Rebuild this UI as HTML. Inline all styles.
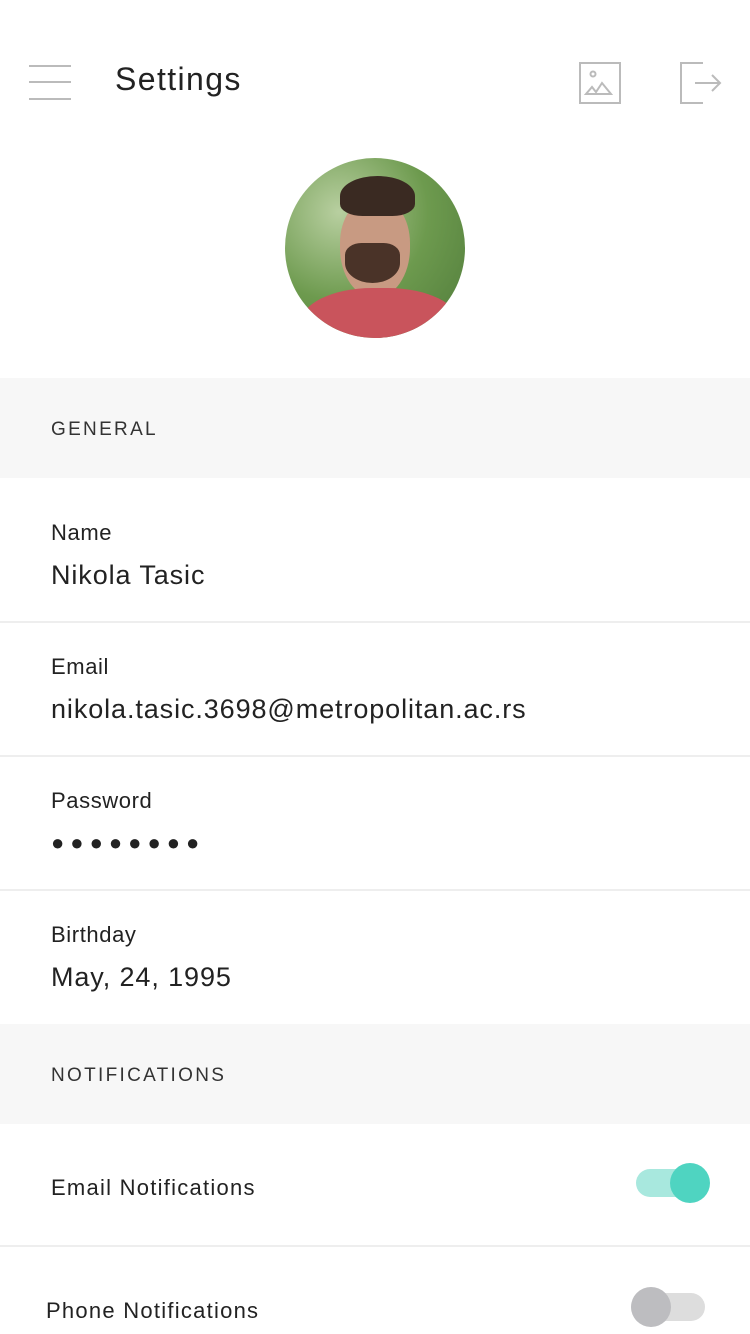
<!DOCTYPE html>
<html><head><meta charset="utf-8"><style>
*{margin:0;padding:0;box-sizing:border-box}
body{width:750px;height:1334px;overflow:hidden;background:#fff;font-family:"Liberation Sans",sans-serif;color:#222;position:relative}
.abs{position:absolute}
.sec{position:absolute;left:0;width:750px;height:100px;background:#f7f7f7}
.sec span{position:absolute;left:51px;top:41px;font-size:19px;letter-spacing:2.3px;color:#333}
.lbl{position:absolute;left:51px;font-size:22px;color:#222;letter-spacing:0.6px}
.val{position:absolute;left:51px;font-size:27px;color:#222;letter-spacing:0.9px}
.hr{position:absolute;left:0;width:750px;height:2px;background:#eee}
</style></head><body>
<div class="abs" style="left:29px;top:65px;width:42px;height:2px;background:#bbb"></div>
<div class="abs" style="left:29px;top:81px;width:42px;height:2px;background:#bbb"></div>
<div class="abs" style="left:29px;top:98px;width:42px;height:2px;background:#bbb"></div>
<div class="abs" style="left:115px;top:61px;font-size:32px;color:#222;letter-spacing:1.4px">Settings</div>
<svg class="abs" style="left:578px;top:61px" width="44" height="44" viewBox="0 0 44 44" fill="none" stroke="#bbb" stroke-width="2">
<rect x="2" y="2" width="40" height="40"/><circle cx="15" cy="13" r="2.5"/><path d="M8 33 L14 26 L18 31 L24 22 L33 33 Z"/></svg>
<svg class="abs" style="left:678px;top:61px" width="44" height="44" viewBox="0 0 44 44" fill="none" stroke="#bbb" stroke-width="2">
<path d="M25 2 H3 V42 H25"/><path d="M17 22 H42 M34 14 L42 22 L34 30"/></svg>
<div class="abs" style="left:285px;top:158px;width:180px;height:180px;border-radius:50%;overflow:hidden;background:radial-gradient(circle at 30% 30%,#b8cfa0,#6d9a4e 50%,#4f7a3a)">
<div class="abs" style="left:55px;top:40px;width:70px;height:100px;border-radius:45% 45% 50% 50%;background:#c89a82"></div>
<div class="abs" style="left:55px;top:18px;width:75px;height:40px;border-radius:50% 50% 30% 30%;background:#3a2a22"></div>
<div class="abs" style="left:60px;top:85px;width:55px;height:40px;border-radius:30% 30% 50% 50%;background:#4a3328"></div>
<div class="abs" style="left:15px;top:130px;width:160px;height:80px;border-radius:45% 45% 0 0;background:#c9545c"></div>
</div>
<div class="sec" style="top:378px"><span>GENERAL</span></div>
<div class="lbl" style="top:520px">Name</div><div class="val" style="top:560px">Nikola Tasic</div>
<div class="hr" style="top:621px"></div>
<div class="lbl" style="top:654px">Email</div><div class="val" style="top:694px">nikola.tasic.3698@metropolitan.ac.rs</div>
<div class="hr" style="top:755px"></div>
<div class="lbl" style="top:788px">Password</div><div class="val" style="top:830px;font-size:22px;letter-spacing:6px">●●●●●●●●</div>
<div class="hr" style="top:889px"></div>
<div class="lbl" style="top:922px">Birthday</div><div class="val" style="top:962px">May, 24, 1995</div>
<div class="sec" style="top:1024px"><span>NOTIFICATIONS</span></div>
<div class="lbl" style="top:1175px;letter-spacing:1.25px">Email Notifications</div>
<div class="abs" style="left:636px;top:1169px;width:72px;height:28px;border-radius:14px;background:#a8e8de"></div>
<div class="abs" style="left:670px;top:1163px;width:40px;height:40px;border-radius:50%;background:#4fd4c1"></div>
<div class="hr" style="top:1245px"></div>
<div class="lbl" style="top:1298px;left:46px;letter-spacing:1.25px">Phone Notifications</div>
<div class="abs" style="left:631px;top:1293px;width:74px;height:28px;border-radius:14px;background:#ddd"></div>
<div class="abs" style="left:631px;top:1287px;width:40px;height:40px;border-radius:50%;background:#bdbdc0"></div>
</body></html>
